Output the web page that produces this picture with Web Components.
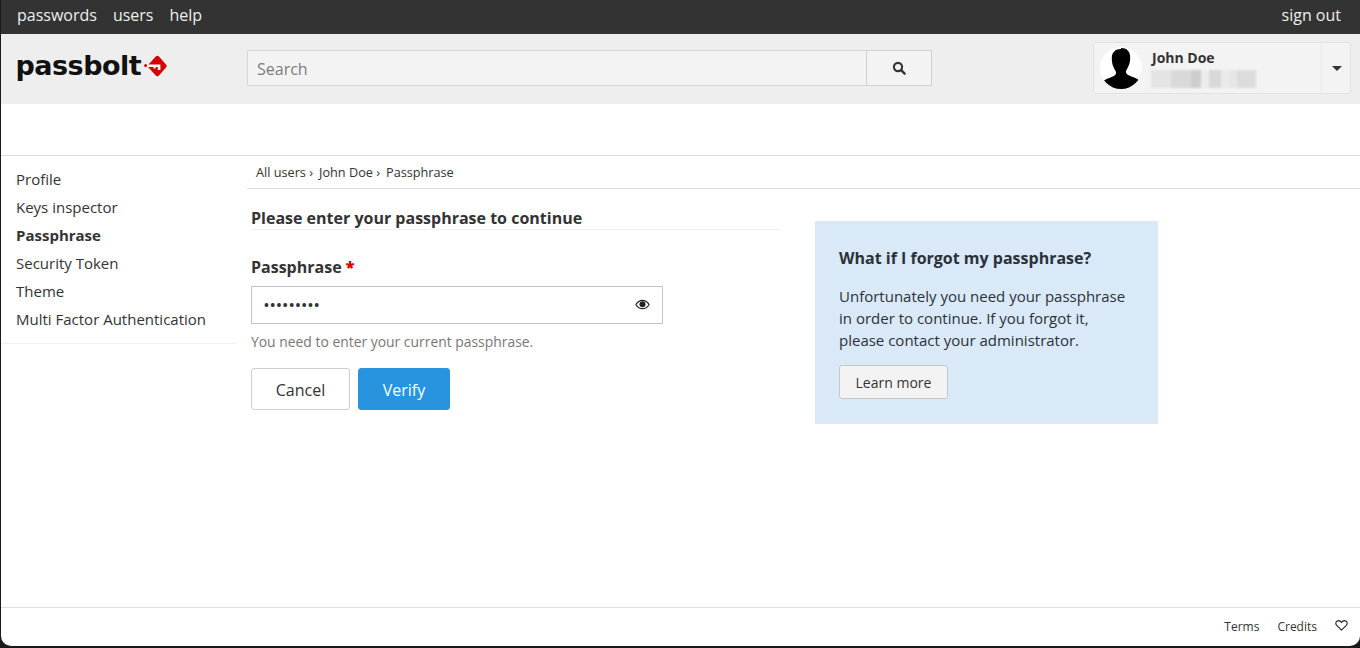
<!DOCTYPE html>
<html lang="en">
<head>
<meta charset="utf-8">
<title>passbolt</title>
<style>
  html, body { margin: 0; height: 648px; overflow: hidden; background: #1a1a1a; }
  body { font-family: "Open Sans", "Noto Sans", sans-serif; color: #333; font-size: 14px; }
  pb-app { --line: #dedede; --soft-line: #f0f0f0; --ink: #333; --muted: #777; }
</style>
</head>
<body>
<pb-app>
  <pb-topbar slot="top">
    <a>passwords</a><a>users</a><a>help</a>
    <a slot="end">sign out</a>
  </pb-topbar>
  <pb-header slot="top" name="John Doe"></pb-header>
  <pb-sidebar slot="side">
    <a>Profile</a>
    <a>Keys inspector</a>
    <a class="on">Passphrase</a>
    <a>Security Token</a>
    <a>Theme</a>
    <a>Multi Factor Authentication</a>
  </pb-sidebar>
  <pb-breadcrumb slot="crumbs">
    <a>All users</a><a>John Doe</a><a>Passphrase</a>
  </pb-breadcrumb>
  <pb-passphrase-form slot="main"></pb-passphrase-form>
  <pb-help-box slot="main" title="What if I forgot my passphrase?" action="Learn more">
    Unfortunately you need your passphrase in order to continue. If you forgot it, please contact your administrator.
  </pb-help-box>
  <pb-footer slot="bottom"></pb-footer>
</pb-app>

<script>
/* each element renders its markup + styles once into an open shadow root */
class ShadowElement extends HTMLElement {
  connectedCallback() {
    if (this.shadowRoot) return;
    this.attachShadow({ mode: "open" }).innerHTML = this.render();
  }
}

customElements.define("pb-app", class extends ShadowElement {
  render() {
    return `
      <style>
        :host {
          display: flex;
          flex-direction: column;
          height: 646px;
          margin-left: 1px;
          background: #fff;
          border-radius: 0 0 10px 10px;
          overflow: hidden;
        }
        .spacer { height: 51px; flex: none; border-bottom: 1px solid var(--line); }
        .body { flex: 1; display: flex; min-height: 0; }
        .side { width: 235px; flex: none; }
        .content { flex: 1; min-width: 0; margin-left: 11px; }
        .panels { display: flex; align-items: flex-start; padding: 20px 0 0 4px; gap: 34px; }
      </style>
      <slot name="top"></slot>
      <div class="spacer"></div>
      <div class="body">
        <div class="side"><slot name="side"></slot></div>
        <div class="content">
          <slot name="crumbs"></slot>
          <div class="panels"><slot name="main"></slot></div>
        </div>
      </div>
      <slot name="bottom"></slot>
    `;
  }
});

customElements.define("pb-topbar", class extends ShadowElement {
  render() {
    return `
      <style>
        :host {
          display: flex;
          justify-content: space-between;
          align-items: center;
          height: 34px;
          padding: 0 19px 5px 16px;
          box-sizing: border-box;
          background: #333;
          color: #eee;
          font-size: 16px;
        }
        .group { display: flex; gap: 16px; }
      </style>
      <div class="group"><slot></slot></div>
      <div class="group"><slot name="end"></slot></div>
    `;
  }
});

customElements.define("pb-logo", class extends ShadowElement {
  render() {
    return `
      <style>
        :host { display: inline-flex; align-items: center; gap: 3px; }
        .word {
          margin-left: -1.5px;
          font-family: "DejaVu Sans", sans-serif;
          font-weight: 700;
          font-size: 27px;
          line-height: 30px;
          letter-spacing: -0.5px;
          color: #111;
        }
        svg { display: block; flex: none; }
      </style>
      <span class="word">passbolt</span>
      <svg width="23" height="22" viewBox="0 0 23 22" aria-hidden="true">
        <circle cx="1.6" cy="10.500" r="1.500" fill="#d40101"/>
        <path d="M12 1.300a2 2 0 0 1 2.700 0l7.300 8.300a2 2 0 0 1 0 2.800l-7.300 8.300a2 2 0 0 1-2.700 0L4.500 12.400a2 2 0 0 1 0-2.800z" fill="#d40101"/>
        <path d="M3.500 9.400H16.400V15H13.800V12H11.600V13.500H9.600V12H3.500z" fill="#fff"/>
      </svg>
    `;
  }
});

customElements.define("pb-header", class extends ShadowElement {
  render() {
    return `
      <style>
        :host {
          display: flex;
          align-items: center;
          height: 70px;
          box-sizing: border-box;
          padding: 0 9px 0 16px;
          background: #eee;
        }
        .logo { width: 230px; flex: none; margin-top: -6px; }
        .search { display: flex; width: 685px; height: 36px; margin-top: -2px; }
        .field {
          flex: 1;
          display: flex;
          align-items: center;
          padding: 2px 9px 0;
          background: #f3f3f3;
          border: 1px solid #d6d6d6;
          border-right: 0;
          color: #7d7d7d;
          font-size: 16px;
        }
        .go {
          width: 64px;
          display: grid;
          place-items: center;
          background: #f3f3f3;
          border: 1px solid #cfcfcf;
        }
        .user {
          display: flex;
          width: 258px;
          height: 52px;
          margin: -2px 0 0 auto;
          box-sizing: border-box;
          background: #f3f3f3;
          border: 1px solid #e2e2e2;
          border-radius: 3px;
        }
        .avatar {
          width: 42px;
          height: 42px;
          margin: 4px 10px 0 6px;
          border-radius: 50%;
          background: #fff;
          overflow: hidden;
          flex: none;
        }
        .who { flex: 1; padding-top: 5px; }
        .name { font-weight: 700; font-size: 14px; line-height: 19px; color: #333; }
        .mail { display: flex; width: 105px; height: 18px; margin: 3px 0 0 -1px; filter: blur(1.2px); background: #dcdcdc; }
        .mail i { display: block; height: 100%; }
        .more {
          width: 26px;
          flex: none;
          display: grid;
          place-items: center;
          padding-left: 2px;
          border-left: 1px solid #e8e8e8;
        }
        .caret { width: 0; height: 0; border: 5px solid transparent; border-top: 5px solid #333; border-bottom: 0; margin-top: 1px; }
      </style>
      <div class="logo"><pb-logo></pb-logo></div>
      <div class="search">
        <div class="field">Search</div>
        <div class="go">
          <svg width="14" height="14" viewBox="0 0 14 14" fill="none" stroke="#333" aria-hidden="true">
            <circle cx="6" cy="6" r="4.100" stroke-width="2.100"/>
            <path d="M9.200 9.200 12.600 12.600" stroke-width="2.400" stroke-linecap="round"/>
          </svg>
        </div>
      </div>
      <div class="user">
        <div class="avatar">
          <svg width="42" height="42" viewBox="0 0 42 42" aria-hidden="true">
            <path fill="#000" d="M21 1c5.800 0 9.200 3.400 9.200 9 0 3.500-.5 5.800-1.100 7.600-.6 2-1.500 3.700-2.500 5.100-.9 1.300-.8 3 .2 4.200 1.300 1.400 4.500 2.400 7.400 3.500 3 1.200 5.100 2.700 6.400 5.300 0 0-5.600 8.300-19.600 8.300S1.400 36.700 1.400 36.700c1.300-2.600 3.400-4.100 6.400-5.300 2.900-1.100 6.100-2.100 7.400-3.500 1-1.200 1.100-2.900.2-4.200-1-1.400-1.900-3.100-2.500-5.100-.6-1.800-1.100-4.100-1.100-7.600 0-5.600 3.400-9 9.200-9z"/>
          </svg>
        </div>
        <div class="who">
          <div class="name">${this.getAttribute("name") ?? ""}</div>
          <div class="mail">
            <i style="width:20px;background:#e4e4e4"></i><i style="width:20px;background:#d9d9d9"></i>
            <i style="width:10px;background:#cdcdcd"></i><i style="width:8px;background:#ededed"></i>
            <i style="width:12px;background:#d8d8d8"></i><i style="width:8px;background:#eaeaea"></i>
            <i style="width:8px;background:#e6e6e6"></i><i style="width:19px;background:#dcdcdc"></i>
          </div>
        </div>
        <div class="more"><span class="caret"></span></div>
      </div>
    `;
  }
});

customElements.define("pb-sidebar", class extends ShadowElement {
  render() {
    return `
      <style>
        :host {
          display: block;
          padding: 9px 0 10px 15px;
          border-bottom: 1px solid var(--soft-line);
        }
        ::slotted(a) { display: block; height: 28px; line-height: 28px; font-size: 15px; color: var(--ink); }
        ::slotted(a.on) { font-weight: 700; }
      </style>
      <slot></slot>
    `;
  }
});

customElements.define("pb-breadcrumb", class extends ShadowElement {
  connectedCallback() {
    super.connectedCallback();
    // chevrons go between the crumbs, not after the last one
    [...this.children].slice(0, -1).forEach(a => a.insertAdjacentText("beforeend", " ›"));
  }
  render() {
    return `
      <style>
        :host {
          display: flex;
          gap: 6px;
          height: 33px;
          box-sizing: border-box;
          padding: 0 0 0 9px;
          align-items: center;
          border-bottom: 1px solid var(--line);
          font-size: 12.700px;
          color: var(--ink);
        }
      </style>
      <slot></slot>
    `;
  }
});

customElements.define("pb-passphrase-form", class extends ShadowElement {
  render() {
    return `
      <style>
        :host { display: block; width: 530px; flex: none; color: var(--ink); }
        h3 {
          margin: -1px 0 0;
          height: 21px;
          line-height: 21px;
          font-size: 16px;
          font-weight: 700;
          border-bottom: 1px solid var(--soft-line);
        }
        label { display: block; margin-top: 26px; font-size: 16px; font-weight: 700; line-height: 22px; }
        label b { color: #d40101; }
        .input {
          display: flex;
          justify-content: space-between;
          align-items: center;
          box-sizing: border-box;
          width: 412px;
          height: 38px;
          margin-top: 8px;
          padding: 0 12px;
          border: 1px solid #c4c4c4;
          font-weight: 700;
        }
        .dots { font-size: 13px; letter-spacing: 1.400px; line-height: 1; }
        svg { margin-top: -2px; }
        .hint { margin: 8px 0 0; font-size: 13.900px; line-height: 20px; color: var(--muted); }
        .actions { display: flex; gap: 8px; margin-top: 16px; }
        button {
          height: 42px;
          font: inherit;
          font-size: 16px;
          border-radius: 3px;
          padding: 2px 0 0;
          border: 1px solid #cfcfcf;
          background: #fff;
          color: var(--ink);
        }
        .cancel { width: 99px; }
        .verify { width: 92px; background: #2894df; border-color: #2894df; color: #fff; font-weight: 500; }
      </style>
      <h3>Please enter your passphrase to continue</h3>
      <label>Passphrase <b>*</b></label>
      <div class="input">
        <span class="dots">•••••••••</span>
        <svg width="15" height="11" viewBox="0 0 16 12" aria-hidden="true">
          <path d="M.8 6C2.600 3 5 1.400 8 1.400S13.400 3 15.200 6C13.400 9 11 10.600 8 10.600S2.600 9 .8 6z" fill="none" stroke="#222" stroke-width="1.300"/>
          <circle cx="8" cy="5.700" r="3.300" fill="#222"/>
        </svg>
      </div>
      <p class="hint">You need to enter your current passphrase.</p>
      <div class="actions">
        <button class="cancel">Cancel</button>
        <button class="verify">Verify</button>
      </div>
    `;
  }
});

customElements.define("pb-help-box", class extends ShadowElement {
  render() {
    return `
      <style>
        :host {
          display: block;
          box-sizing: border-box;
          width: 343px;
          height: 203px;
          margin-top: 12px;
          padding: 24px 24px 0;
          background: #d9e9f8;
          color: #2b3138;
        }
        h3 { margin: 0; font-size: 16px; line-height: 26px; font-weight: 700; }
        p { margin: 14px 0 0; font-size: 15px; line-height: 22px; }
        button {
          display: block;
          width: 109px;
          height: 34px;
          margin-top: 14px;
          padding: 0;
          font: inherit;
          font-size: 14px;
          color: var(--ink);
          background: #f3f3f3;
          border: 1px solid #c6c6c6;
          border-radius: 3px;
        }
      </style>
      <h3>${this.getAttribute("title") ?? ""}</h3>
      <p><slot></slot></p>
      <button>${this.getAttribute("action") ?? ""}</button>
    `;
  }
});

customElements.define("pb-footer", class extends ShadowElement {
  render() {
    return `
      <style>
        :host {
          display: flex;
          justify-content: flex-end;
          align-items: center;
          gap: 18px;
          height: 39px;
          box-sizing: border-box;
          padding: 0 12px 2px 0;
          border-top: 1px solid var(--line);
          font-size: 12px;
          color: var(--ink);
        }
        svg { display: block; margin: -2px 0 0 0; }
      </style>
      <span>Terms</span>
      <span>Credits</span>
      <svg width="13" height="11" viewBox="0 0 14 12" fill="none" stroke="#222" stroke-width="1.200" aria-hidden="true">
        <path d="M7 11 1.700 5.800C.3 4.300.6 2.300 1.900 1.400 3.400.4 5.600.7 7 2.600 8.400.7 10.600.4 12.100 1.400c1.300.9 1.600 2.900.2 4.400z"/>
      </svg>
    `;
  }
});
</script>
</body>
</html>
